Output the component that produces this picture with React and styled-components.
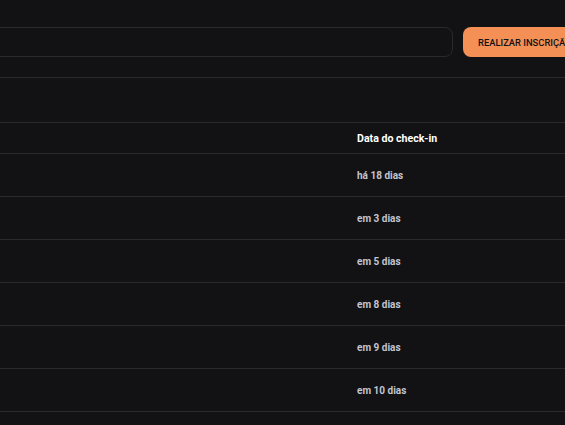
import React from 'react';
import styled, { createGlobalStyle } from 'styled-components';

const GlobalStyle = createGlobalStyle`
  html, body {
    margin: 0;
    padding: 0;
    background: #121214;
    overflow: hidden;
  }
  body {
    font-family: Roboto, 'Liberation Sans', sans-serif;
    color: #e1e1e6;
  }
`;

const Page = styled.div`
  width: 1200px;
  margin-left: -400px;
  display: flex;
  flex-direction: column;
`;

const Header = styled.header`
  display: flex;
  align-items: stretch;
  gap: 10px;
  padding: 27px 0 20px;
  border-bottom: 1px solid #29292e;
`;

const SearchInput = styled.input`
  width: 853px;
  height: 30px;
  box-sizing: border-box;
  background: #121214;
  border: 1px solid #29292e;
  border-radius: 8px;
  outline: none;
`;

const Button = styled.button`
  height: 30px;
  padding: 0 15px;
  border: none;
  border-radius: 8px;
  background: #f48f56;
  color: #121214;
  font-family: Roboto, 'Liberation Sans', sans-serif;
  font-weight: 500;
  font-size: 9.4px;
  text-transform: uppercase;
  white-space: nowrap;
`;

const Spacer = styled.div`
  height: 44px;
`;

const Table = styled.div`
  border-top: 1px solid #29292e;
`;

const Row = styled.div`
  display: grid;
  grid-template-columns: 757px 1fr;
  align-items: center;
  height: ${(p) => (p.$head ? 30 : 42)}px;
  border-bottom: 1px solid #29292e;
`;

const Cell = styled.div`
  font-size: ${(p) => (p.$head ? 10.6 : 10)}px;
  font-weight: 700;
  color: ${(p) => (p.$head ? '#ffffff' : '#c4c4cc')};
`;

const rows = ['há 18 dias', 'em 3 dias', 'em 5 dias', 'em 8 dias', 'em 9 dias', 'em 10 dias'];

export default function App() {
  return (
    <Page>
      <GlobalStyle />
      <Header>
        <SearchInput />
        <Button>Realizar inscrição</Button>
      </Header>
      <Spacer />
      <Table>
        <Row $head>
          <Cell />
          <Cell $head>Data do check-in</Cell>
        </Row>
        {rows.map((r, index) => (
          <Row key={index}>
            <Cell />
            <Cell>{r}</Cell>
          </Row>
        ))}
      </Table>
    </Page>
  );
}
